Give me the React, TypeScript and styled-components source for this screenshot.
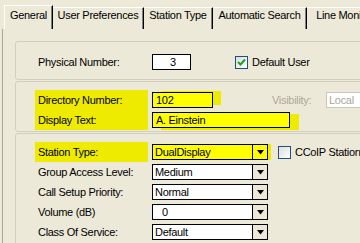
import styled, { createGlobalStyle } from "styled-components";

const GlobalStyle = createGlobalStyle`
  body {
    margin: 0;
    background: #ece9d8;
    font-family: "Liberation Sans", Arial, sans-serif;
    font-size: 11px;
    letter-spacing: -0.3px;
    color: #000;
  }
`;

const MARK = "#efeb00";

const Window = styled.div`
  width: 360px;
  height: 243px;
  overflow: hidden;
  background: #ece9d8;
`;

const TabStrip = styled.div`
  display: flex;
  align-items: flex-end;
  height: 29px;
  padding-left: 4px;
  white-space: nowrap;
`;

const Tab = styled.div<{ w: number; active?: boolean }>`
  flex: none;
  box-sizing: border-box;
  width: ${(p) => p.w}px;
  height: ${(p) => (p.active ? 24 : 22)}px;
  padding-top: ${(p) => (p.active ? 3 : 1)}px;
  line-height: 13px;
  text-align: center;
  border-top: 1px solid #fff;
  border-left: ${(p) => (p.active ? "1px solid #fff" : "none")};
  border-right: 1px solid #000;
  box-shadow: inset -1px 0 0 #808080;
`;

const Pane = styled.div`
  margin-left: 2px;
  border-left: 1px solid #aca899;
  padding: 12px 0 0 12px;
  height: 300px;
`;

const GroupBox = styled.div<{ top: number; bottom: number }>`
  width: 420px;
  border: 1px solid #d0d0bf;
  border-radius: 3px;
  margin-bottom: 1px;
  padding: ${(p) => p.top}px 0 ${(p) => p.bottom}px 22px;
  display: flex;
  flex-direction: column;
  gap: 4px;
`;

const Row = styled.div`
  display: flex;
  align-items: center;
  height: 16px;
`;

const Label = styled.div<{ marked?: boolean }>`
  flex: none;
  width: 114px;
  height: 16px;
  line-height: 16px;
  white-space: nowrap;
  ${(p) =>
    p.marked &&
    `
    background: ${MARK};
    margin-left: -3px;
    padding-left: 3px;
    width: 110px;
    margin-right: 4px;
    box-shadow: 0 -2px 0 ${MARK}, 0 2px 0 ${MARK};
  `}
`;

const TextBox = styled.div<{ w: number; mark?: string; center?: boolean }>`
  flex: none;
  box-sizing: border-box;
  width: ${(p) => p.w}px;
  height: 16px;
  line-height: 14px;
  padding-left: 3px;
  border: 1px solid #000;
  background: ${(p) => (p.mark ? "#ffff00" : "#fff")};
  text-align: ${(p) => (p.center ? "center" : "left")};
  ${(p) => p.mark && `box-shadow: ${p.mark} ${MARK};`}
`;

const Disabled = styled.div`
  flex: none;
  color: #aca899;
  margin-left: 59px;
  width: 54px;
`;

const DisabledBox = styled.div`
  flex: none;
  box-sizing: border-box;
  width: 60px;
  height: 16px;
  line-height: 14px;
  padding-left: 2px;
  border: 1px solid #c9c7ba;
  background: #fff;
  color: #aca899;
`;

const Select = styled.div<{ marked?: boolean }>`
  flex: none;
  box-sizing: border-box;
  display: flex;
  width: 116px;
  height: 16px;
  border: 1px solid #000;
  background: ${(p) => (p.marked ? "#ffff00" : "#fff")};
  ${(p) => p.marked && `box-shadow: 3px 0 0 0 ${MARK};`}
`;

const SelectText = styled.div<{ inset?: number }>`
  flex: 1;
  line-height: 14px;
  padding-left: ${(p) => p.inset ?? 2}px;
`;

const DropButton = styled.div<{ marked?: boolean }>`
  flex: none;
  width: 14px;
  border-left: 1px solid #000;
  background: ${(p) => (p.marked ? "#ffff00" : "#ece9d8")};
  display: flex;
  align-items: center;
  justify-content: center;
`;

const Check = styled.div<{ gap: number }>`
  flex: none;
  display: flex;
  align-items: center;
  gap: 4px;
  margin-left: ${(p) => p.gap}px;
  white-space: nowrap;
`;

const CheckBox = styled.div`
  box-sizing: border-box;
  width: 13px;
  height: 13px;
  border: 1px solid #1c5180;
  background: linear-gradient(135deg, #dcdcd7, #fff);
  display: flex;
  align-items: center;
  justify-content: center;
`;

const Arrow = ({ marked }: { marked?: boolean }) => (
  <DropButton marked={marked}>
    <svg width="7" height="5" viewBox="0 0 7 5">
      <path d="M0 0H7L3.5 4.5Z" fill="#000" />
    </svg>
  </DropButton>
);

const Tick = () => (
  <svg width="9" height="9" viewBox="0 0 9 9">
    <path d="M1 4 L3.5 6.5 L8 1.5" stroke="#21a121" strokeWidth="2" fill="none" />
  </svg>
);

const tabs = [
  { name: "General", w: 49 },
  { name: "User Preferences", w: 91 },
  { name: "Station Type", w: 69 },
  { name: "Automatic Search", w: 94 },
  { name: "Line Monitoring", w: 90 },
];

const selects = [
  { label: "Group Access Level:", value: "Medium" },
  { label: "Call Setup Priority:", value: "Normal" },
  { label: "Volume (dB)", value: "0", inset: 9 },
  { label: "Class Of Service:", value: "Default" },
];

export default function App() {
  return (
    <Window>
      <GlobalStyle />
      <TabStrip>
        {tabs.map((t, i) => (
          <Tab key={t.name} w={t.w} active={i === 0}>
            {t.name}
          </Tab>
        ))}
      </TabStrip>
      <Pane>
        <GroupBox top={12} bottom={9}>
          <Row>
            <Label>Physical Number:</Label>
            <TextBox w={39} center>
              3
            </TextBox>
            <Check gap={44}>
              <CheckBox>
                <Tick />
              </CheckBox>
              Default User
            </Check>
          </Row>
        </GroupBox>
        <GroupBox top={10} bottom={3}>
          <Row>
            <Label marked>Directory Number:</Label>
            <TextBox w={61} mark="9px -2px 0 -1px">
              102
            </TextBox>
            <Disabled>Visibility:</Disabled>
            <DisabledBox>Local</DisabledBox>
          </Row>
          <Row>
            <Label marked>Display Text:</Label>
            <TextBox w={138} mark="9px 2px 0 0">
              A. Einstein
            </TextBox>
          </Row>
        </GroupBox>
        <GroupBox top={10} bottom={10}>
          <Row>
            <Label marked>Station Type:</Label>
            <Select marked>
              <SelectText>DualDisplay</SelectText>
              <Arrow marked />
            </Select>
            <Check gap={10}>
              <CheckBox />
              CCoIP Station
            </Check>
          </Row>
          {selects.map((s) => (
            <Row key={s.label}>
              <Label>{s.label}</Label>
              <Select>
                <SelectText inset={s.inset}>{s.value}</SelectText>
                <Arrow />
              </Select>
            </Row>
          ))}
        </GroupBox>
      </Pane>
    </Window>
  );
}
